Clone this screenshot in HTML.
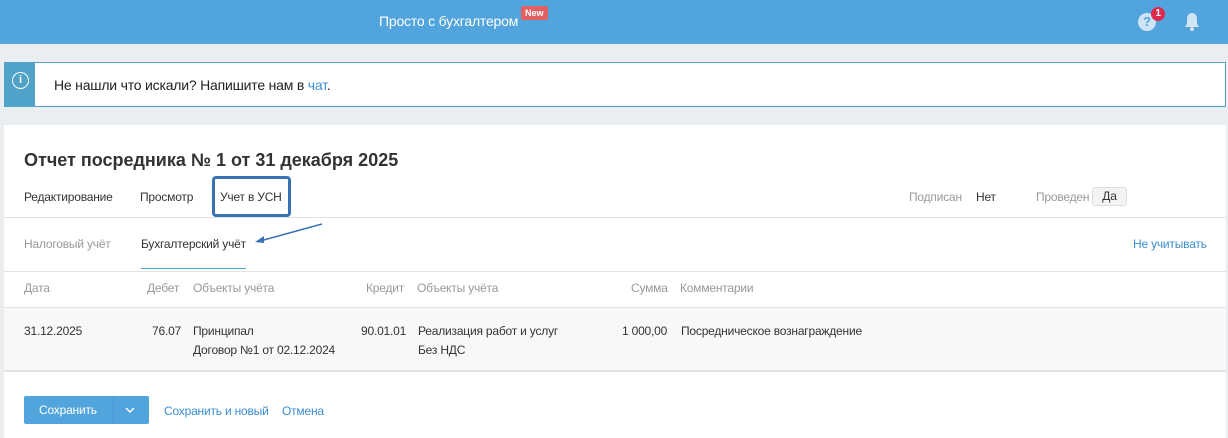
<!DOCTYPE html>
<html><head><meta charset="utf-8"><style>
*{margin:0;padding:0;box-sizing:border-box}
body{width:1228px;height:438px;background:#ebeef1;font-family:"Liberation Sans",sans-serif;font-size:12px;color:#333;position:relative;overflow:hidden;letter-spacing:-0.2px}
.a{position:absolute;white-space:nowrap}
.hdr{position:absolute;left:0;top:0;width:1228px;height:44px;background:#52a5dc}
.g{color:#999}
.l{color:#3b8ed0}
</style></head><body>
<div class="hdr"></div>
<div class="a" style="left:379px;top:13px;color:#fff;font-size:14px">Просто с бухгалтером</div>
<div class="a" style="left:521px;top:6px;background:#e2605f;color:#fff;font-size:9px;font-weight:bold;padding:2px 4px;border-radius:2px;letter-spacing:0">New</div>
<div class="a" style="left:1138px;top:13px;width:18px;height:18px;border-radius:50%;background:#cfe5f5;color:#52a5dc;font-weight:bold;font-size:13px;text-align:center;line-height:18px">?</div>
<div class="a" style="left:1151px;top:7px;width:14px;height:14px;border-radius:50%;background:#e0294e;color:#fff;font-size:10px;font-weight:bold;text-align:center;line-height:14px">1</div>
<svg class="a" style="left:1183px;top:12px" width="18" height="20" viewBox="0 0 18 20"><path d="M9 1c-3 0-5 2.5-5 5.5v5L2 15h14l-2-3.5v-5C14 3.5 12 1 9 1z" fill="#cfe5f5"/><circle cx="9" cy="17" r="2" fill="#cfe5f5"/></svg>

<div class="a" style="left:4px;top:62px;width:1222px;height:45px;background:#fff;border:1px solid #4fa3c8"></div>
<div class="a" style="left:4px;top:62px;width:31px;height:45px;background:#4fa3c8"></div>
<div class="a" style="left:12px;top:72px;width:17px;height:17px;border:1.5px solid #fff;border-radius:50%;color:#fff;font-size:11px;font-weight:bold;text-align:center;line-height:14px;letter-spacing:0">i</div>
<div class="a" style="left:54px;top:77px;font-size:14px;color:#222">Не нашли что искали? Напишите нам в <span class="l">чат</span>.</div>

<div class="a" style="left:4px;top:125px;width:1222px;height:313px;background:#fff"></div>
<div class="a" style="left:24px;top:150px;font-size:18px;font-weight:bold;color:#333;letter-spacing:0">Отчет посредника № 1 от 31 декабря 2025</div>
<div class="a" style="left:24px;top:190px">Редактирование</div>
<div class="a" style="left:140px;top:190px">Просмотр</div>
<div class="a" style="left:212px;top:176px;width:79px;height:41px;border:3px solid #3a73b5;border-radius:4px"></div>
<div class="a" style="left:220px;top:190px">Учет в УСН</div>
<div class="a g" style="left:909px;top:190px">Подписан</div>
<div class="a" style="left:976px;top:190px">Нет</div>
<div class="a g" style="left:1036px;top:190px">Проведен</div>
<div class="a" style="left:1092px;top:187px;width:35px;height:19px;background:#f3f3f3;border:1px solid #ddd;border-radius:3px;text-align:center;line-height:17px">Да</div>
<div class="a" style="left:4px;top:217px;width:1222px;height:1px;background:#e2e2e2"></div>
<div class="a g" style="left:24px;top:237px">Налоговый учёт</div>
<div class="a" style="left:141px;top:237px">Бухгалтерский учёт</div>
<div class="a" style="left:141px;top:268px;width:105px;height:1px;background:#52a5dc"></div>
<svg class="a" style="left:252px;top:222px" width="72" height="22"><path d="M70 2L8 19" stroke="#3a73b5" stroke-width="1.5"/><path d="M3 20L12 14L12 21Z" fill="#3a73b5"/></svg>
<div class="a l" style="left:1133px;top:237px">Не учитывать</div>
<div class="a" style="left:4px;top:271px;width:1222px;height:1px;background:#e2e2e2"></div>
<div class="a g" style="left:24px;top:281px">Дата</div>
<div class="a g" style="left:147px;top:281px">Дебет</div>
<div class="a g" style="left:193px;top:281px">Объекты учёта</div>
<div class="a g" style="left:366px;top:281px">Кредит</div>
<div class="a g" style="left:417px;top:281px">Объекты учёта</div>
<div class="a g" style="left:631px;top:281px">Сумма</div>
<div class="a g" style="left:680px;top:281px">Комментарии</div>
<div class="a" style="left:4px;top:307px;width:1222px;height:65px;background:#f8f8f8;border-top:1px solid #e2e2e2;border-bottom:2px solid #e2e2e2"></div>
<div class="a" style="left:24px;top:324px">31.12.2025</div>
<div class="a" style="left:152px;top:324px">76.07</div>
<div class="a" style="left:193px;top:322px;line-height:19px">Принципал<br>Договор №1 от 02.12.2024</div>
<div class="a" style="left:361px;top:324px">90.01.01</div>
<div class="a" style="left:418px;top:322px;line-height:19px">Реализация работ и услуг<br>Без НДС</div>
<div class="a" style="left:622px;top:324px">1 000,00</div>
<div class="a" style="left:681px;top:324px">Посредническое вознаграждение</div>
<div class="a" style="left:24px;top:396px;width:125px;height:28px;background:#52a5dc;border-radius:2px"></div>
<div class="a" style="left:113px;top:396px;width:1px;height:28px;background:#4a98cc"></div>
<div class="a" style="left:39px;top:403px;color:#fff">Сохранить</div>
<svg class="a" style="left:125px;top:406px" width="10" height="8"><path d="M1 2l4 4 4-4" stroke="#fff" stroke-width="1.5" fill="none"/></svg>
<div class="a l" style="left:164px;top:404px">Сохранить и новый</div>
<div class="a l" style="left:282px;top:404px">Отмена</div>
</body></html>
